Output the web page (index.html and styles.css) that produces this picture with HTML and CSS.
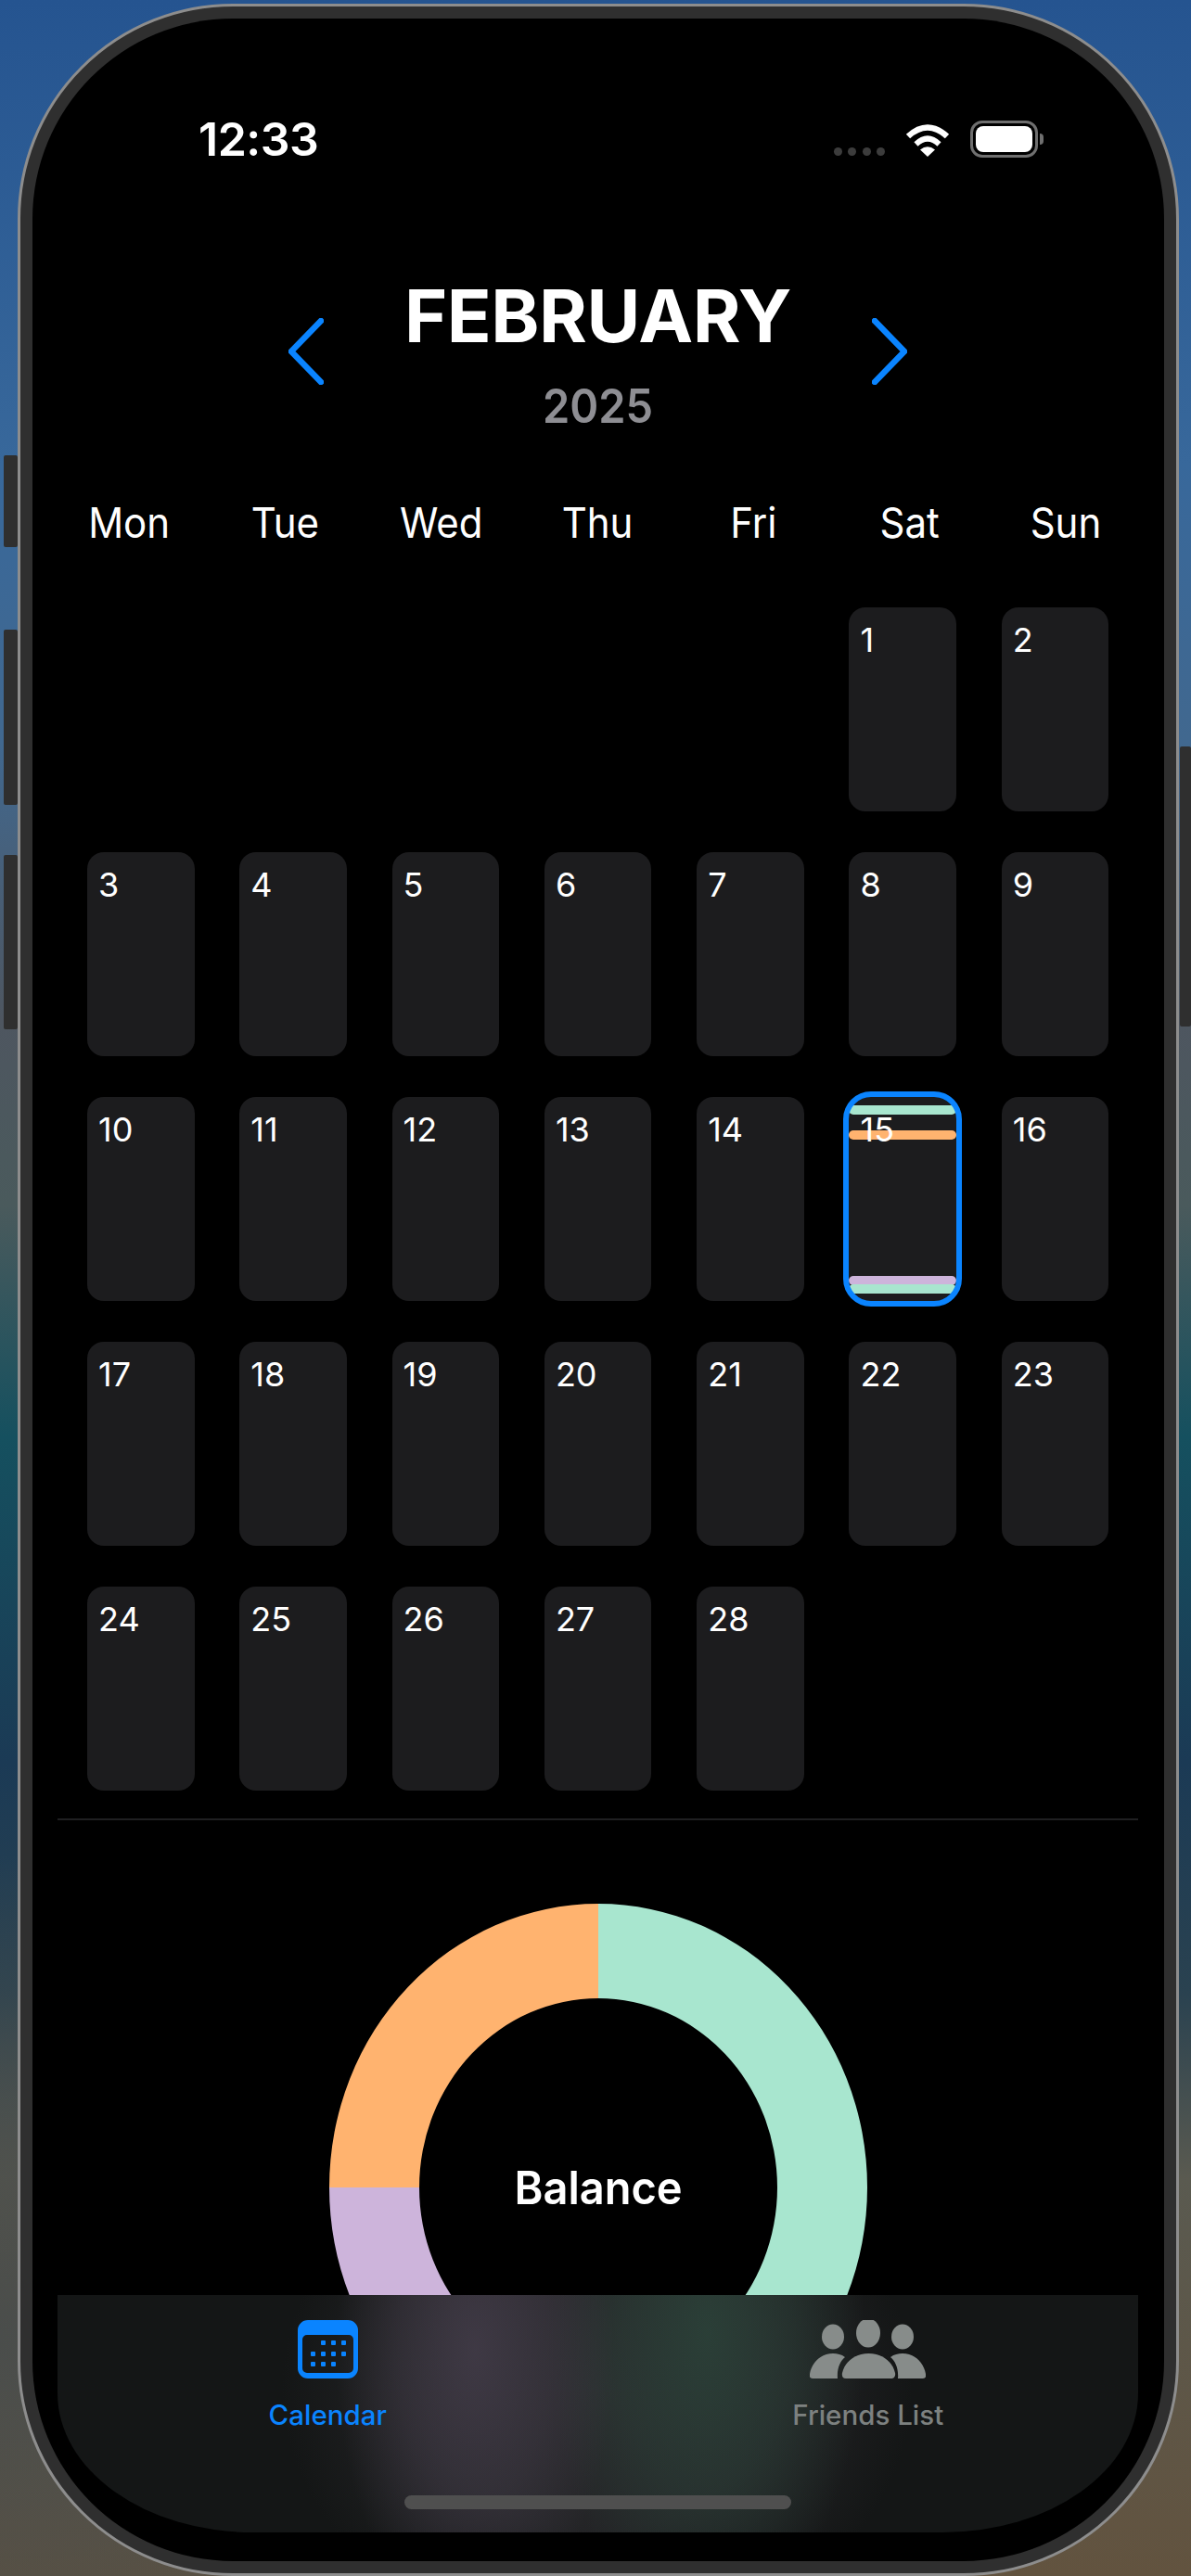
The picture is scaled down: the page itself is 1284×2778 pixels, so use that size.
FILE: index.html
```html
<!DOCTYPE html>
<html lang="en">
<head>
<meta charset="utf-8">
<title>Calendar</title>
<link rel="stylesheet" href="styles.css">
</head>
<body>
<div class="side-btn side-btn-a"></div>
<div class="side-btn side-btn-b"></div>
<div class="side-btn side-btn-c"></div>
<div class="side-btn side-btn-r"></div>
<div class="device">
  <div class="screen">
    <header class="status">
      <span class="time">12:33</span>
      <div class="status-icons">
        <div class="signal"><i></i><i></i><i></i><i></i></div>
        <svg class="wifi" viewBox="0 0 48 37" width="48" height="37" aria-hidden="true">
          <path d="M3 15 Q24 -4 45 15" fill="none" stroke="#fff" stroke-width="6.4"/>
          <path d="M11.5 23.5 Q24 11.5 36.5 23.5" fill="none" stroke="#fff" stroke-width="6"/>
          <path d="M16 29.5 Q24 23 32 29.5 L24 37 Z" fill="#fff"/>
        </svg>
        <div class="battery"><div class="battery-body"><div class="battery-fill"></div></div><div class="battery-cap"></div></div>
      </div>
    </header>

    <section class="month-head">
      <svg class="chev" viewBox="0 0 38 72" width="38" height="72" aria-hidden="true"><path d="M35 3 L3 36 L35 69" fill="none" stroke="#0a84ff" stroke-width="6.5" stroke-linecap="round" stroke-linejoin="round"/></svg>
      <div class="month-title">
        <h1 class="month">FEBRUARY</h1>
        <p class="year">2025</p>
      </div>
      <svg class="chev" viewBox="0 0 38 72" width="38" height="72" aria-hidden="true"><path d="M3 3 L35 36 L3 69" fill="none" stroke="#0a84ff" stroke-width="6.5" stroke-linecap="round" stroke-linejoin="round"/></svg>
    </section>

    <div class="weekdays">
      <span>Mon</span><span>Tue</span><span>Wed</span><span>Thu</span><span>Fri</span><span>Sat</span><span>Sun</span>
    </div>

    <div class="days">
      <div class="day day-first">1</div><div class="day">2</div>
      <div class="day">3</div><div class="day">4</div><div class="day">5</div><div class="day">6</div><div class="day">7</div><div class="day">8</div><div class="day">9</div>
      <div class="day">10</div><div class="day">11</div><div class="day">12</div><div class="day">13</div><div class="day">14</div>
      <div class="day day-selected">
        <span class="bar bar-green bar-1"></span>
        <span class="bar bar-orange bar-2"></span>
        <span class="bar bar-purple bar-3"></span>
        <span class="bar bar-green bar-4"></span>
        <span class="day-num">15</span>
        <span class="ring"></span>
      </div>
      <div class="day">16</div>
      <div class="day">17</div><div class="day">18</div><div class="day">19</div><div class="day">20</div><div class="day">21</div><div class="day">22</div><div class="day">23</div>
      <div class="day">24</div><div class="day">25</div><div class="day">26</div><div class="day">27</div><div class="day">28</div>
    </div>

    <hr class="divider">

    <div class="donut">
      <svg viewBox="0 0 580 612" width="580" height="612" aria-hidden="true">
        <path fill="#ffb36f" d="M0 306 A290 306 0 0 1 290 0 L290 102 A193 204 0 0 0 97 306 Z"/>
        <path fill="#a8e6cf" d="M290 0 A290 306 0 0 1 290 612 L290 510 A193 204 0 0 0 290 102 Z"/>
        <path fill="#cdb4db" d="M0 306 A290 306 0 0 0 290 612 L290 510 A193 204 0 0 1 97 306 Z"/>
      </svg>
      <span class="donut-label">Balance</span>
    </div>

    <nav class="tabbar">
      <div class="tabs">
        <div class="tab tab-active">
          <svg class="tab-icon" viewBox="0 0 65 63" width="65" height="63" aria-hidden="true">
            <path fill="#0a84ff" fill-rule="evenodd" d="M11 0 H54 A11 11 0 0 1 65 11 V52 A11 11 0 0 1 54 63 H11 A11 11 0 0 1 0 52 V11 A11 11 0 0 1 11 0 Z M10 16 A5 5 0 0 0 5 21 V52 A5 5 0 0 0 10 57 H55 A5 5 0 0 0 60 52 V21 A5 5 0 0 0 55 16 Z"/>
            <g fill="#0a84ff">
              <rect x="25" y="22" width="5" height="5" rx="1"/><rect x="36" y="22" width="5" height="5" rx="1"/><rect x="47" y="22" width="5" height="5" rx="1"/>
              <rect x="14" y="34" width="5" height="5" rx="1"/><rect x="25" y="34" width="5" height="5" rx="1"/><rect x="36" y="34" width="5" height="5" rx="1"/><rect x="47" y="34" width="5" height="5" rx="1"/>
              <rect x="14" y="45" width="5" height="5" rx="1"/><rect x="25" y="45" width="5" height="5" rx="1"/><rect x="36" y="45" width="5" height="5" rx="1"/>
            </g>
          </svg>
          <span class="tab-label">Calendar</span>
        </div>
        <div class="tab">
          <svg class="tab-icon" viewBox="0 0 125 63" width="125" height="63" aria-hidden="true">
            <g fill="#878c8a">
              <ellipse cx="25" cy="18" rx="12" ry="13.5"/>
              <ellipse cx="63" cy="14" rx="13" ry="15.5"/>
              <ellipse cx="100" cy="18" rx="12" ry="13.5"/>
              <path d="M3 63 Q-1 63 0 58 C2 46 12 36 25 36 C30 36 34 37 38 40 C33 44 29 52 30 63 Z"/>
              <path d="M39 63 Q34 63 35 57 C38 44 50 36 63.5 36 C77 36 89 44 92 57 C93 63 88 63 88 63 Z"/>
              <path d="M122 63 Q126 63 125 58 C123 46 113 36 100 36 C95 36 91 37 87 40 C92 44 96 52 95 63 Z"/>
            </g>
          </svg>
          <span class="tab-label">Friends List</span>
        </div>
      </div>
      <div class="home-indicator"></div>
    </nav>
  </div>
</div>
</body>
</html>
```
FILE: styles.css
```css
* { box-sizing: border-box; }

html, body { margin: 0; padding: 0; }

body {
  position: relative;
  width: 1284px;
  height: 2778px;
  overflow: hidden;
  font-family: Inter, "Liberation Sans", sans-serif;
  color: #fff;
  background:
    radial-gradient(ellipse 700px 520px at 0 2520px, #4a4d4b 0, rgba(74,77,75,0) 100%),
    linear-gradient(to bottom,
      #255490 0,
      #38689b 500px,
      #41688f 800px,
      #4e5660 1100px,
      #4a5a5c 1300px,
      #15505f 1550px,
      #1b3a55 1900px,
      #2a4250 2150px,
      #5a5a50 2350px,
      #62533f 2778px);
}

.side-btn {
  position: absolute;
  background: #2f2f2f;
  border-radius: 2px;
}
.side-btn-a { left: 4px; top: 491px; width: 15px; height: 99px; }
.side-btn-b { left: 4px; top: 679px; width: 15px; height: 189px; }
.side-btn-c { left: 4px; top: 922px; width: 15px; height: 188px; }
.side-btn-r { right: 0; top: 805px; width: 12px; height: 302px; }

.device {
  margin: 4px 0 0 19px;
  width: 1252px;
  height: 2774px;
  padding: 13px;
  border: 3px solid #8d8d8d;
  border-radius: 232px;
  background: #2f2f2f;
}

.screen {
  position: relative;
  height: 100%;
  overflow: hidden;
  background: #000;
  border-radius: 216px;
}

/* status bar */
.status {
  display: flex;
  align-items: flex-start;
  height: 276px;
  padding: 110px 130px 0 179px;
}
.time {
  font-size: 50px;
  font-weight: 600;
  line-height: 40px;
  letter-spacing: -0.5px;
}
.status-icons {
  margin-left: auto;
  display: flex;
  align-items: center;
  gap: 22px;
}
.signal {
  display: flex;
  gap: 6.3px;
  margin-top: 14px;
  align-self: flex-end;
  padding-bottom: 2px;
}
.signal i {
  width: 9px;
  height: 9px;
  border-radius: 50%;
  background: #3c3c3c;
}
.wifi { display: block; }
.battery { display: flex; align-items: center; gap: 2px; }
.battery-body {
  width: 73px;
  height: 40px;
  padding: 3px;
  border: 3px solid #6f6f6f;
  border-radius: 13px;
}
.battery-fill {
  height: 100%;
  background: #fff;
  border-radius: 8px;
}
.battery-cap {
  width: 4px;
  height: 12px;
  background: #6f6f6f;
  border-radius: 0 4px 4px 0;
}

/* month header */
.month-head {
  display: flex;
  align-items: flex-start;
  justify-content: center;
  gap: 87px;
  height: 180px;
  padding-right: 1px;
}
.month-title { text-align: center; }
.month {
  margin: 0;
  font-size: 79px;
  font-weight: 700;
  line-height: 88px;
  letter-spacing: -0.5px;
}
.year {
  margin: 23px 0 0;
  font-size: 47px;
  font-weight: 600;
  line-height: 62px;
  color: #8e8e93;
  transform: scaleY(1.08);
}
.chev { display: block; flex: none; margin-top: 47px; }

/* week header */
.weekdays {
  display: grid;
  grid-template-columns: repeat(7, 168.3px);
  margin-top: 63px;
  padding-left: 20px;
  font-size: 42px;
  line-height: 50px;
  text-align: center;
}
.weekdays span { transform: scaleY(1.08); }

/* days */
.days {
  display: grid;
  grid-template-columns: repeat(7, 115.5px);
  grid-auto-rows: 220px;
  column-gap: 48.8px;
  row-gap: 44px;
  margin-top: 66px;
  padding-left: 59px;
}
.day {
  position: relative;
  padding: 15px 0 0 12px;
  background: #1c1c1e;
  border-radius: 18px;
  font-size: 36px;
  line-height: 40px;
}
.day-first { grid-column-start: 6; }
.day-num { position: relative; }
.bar {
  position: absolute;
  left: 0;
  right: 0;
  height: 10px;
  border-radius: 5px;
}
.bar-green { background: #a8e6cf; }
.bar-orange { background: #ffb36f; }
.bar-purple { background: #cdb4db; }
.bar-1 { top: 9px; }
.bar-2 { top: 36px; }
.bar-3 { top: 193px; }
.bar-4 { top: 202px; }
.ring {
  position: absolute;
  inset: -6px;
  border: 6px solid #0a84ff;
  border-radius: 30px;
}

.divider {
  height: 2px;
  margin: 30px 28px 0 27px;
  border: 0;
  background: #1f1f21;
}

/* donut */
.donut {
  position: relative;
  width: 580px;
  margin: 90px auto 0;
}
.donut svg { display: block; }
.donut-label {
  position: absolute;
  left: 0;
  right: 0;
  top: 276px;
  font-size: 47px;
  font-weight: 600;
  line-height: 60px;
  text-align: center;
  transform: scaleY(1.06);
}

/* tab bar */
.tabbar {
  position: absolute;
  left: 27px;
  right: 28px;
  bottom: 31px;
  height: 256px;
  display: flex;
  flex-direction: column;
  border-radius: 0 0 210px 210px / 0 0 150px 150px;
  background:
    radial-gradient(ellipse 150px 300px at 450px 60px, rgba(64,58,70,0.95) 0, rgba(64,58,70,0.5) 55%, rgba(64,58,70,0) 100%),
    radial-gradient(ellipse 170px 320px at 700px 40px, rgba(43,64,56,0.95) 0, rgba(43,64,56,0.5) 55%, rgba(43,64,56,0) 100%),
    radial-gradient(ellipse 340px 280px at 582px 100px, #2a2a2d 0, rgba(42,42,45,0.7) 55%, rgba(42,42,45,0) 100%),
    #141616;
}
.tabs {
  display: grid;
  grid-template-columns: 1fr 1fr;
  padding-top: 27px;
}
.tab {
  display: flex;
  flex-direction: column;
  align-items: center;
  font-size: 29.5px;
  line-height: 36px;
  color: #7d8180;
}
.tab-active { color: #0a84ff; }
.tab-icon { display: block; }
.tab-label { margin-top: 21px; font-weight: 500; }
.home-indicator {
  width: 417px;
  height: 15px;
  margin: auto auto 25px;
  background: #4f4f4f;
  border-radius: 8px;
}
```
